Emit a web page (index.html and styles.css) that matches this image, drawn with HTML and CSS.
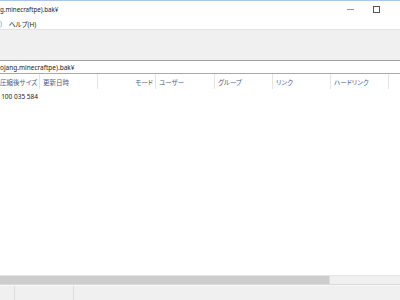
FILE: index.html
```html
<!DOCTYPE html>
<html lang="ja">
<head>
  <meta charset="UTF-8" />
  <title>7-Zip</title>
  <link rel="stylesheet" href="styles.css">
</head>
<body>
  <div class="window">
    <div class="titlebar">
      <span class="title">g.minecraftpe).bak¥</span>
      <div class="controls">
        <span class="ctl-min"></span>
        <span class="ctl-max"></span>
      </div>
    </div>

    <div class="menubar">
      <span class="menu-item menu-cut">)</span>
      <span class="menu-item">ヘルプ(H)</span>
    </div>

    <div class="toolbar"></div>

    <div class="address">
      <span class="path">ojang.minecraftpe).bak¥</span>
    </div>

    <div class="list">
      <div class="list-head">
        <div class="col">圧縮後サイズ</div>
        <div class="col">更新日時</div>
        <div class="col right">モード</div>
        <div class="col">ユーザー</div>
        <div class="col">グループ</div>
        <div class="col">リンク</div>
        <div class="col">ハードリンク</div>
        <div class="col last"></div>
      </div>
      <div class="list-row">
        <div class="cell right">100 035 584</div>
      </div>
    </div>

    <div class="hscroll">
      <div class="thumb"></div>
    </div>

    <div class="statusbar">
      <div class="pane first"></div>
      <div class="pane second"></div>
      <div class="pane"></div>
    </div>
  </div>
</body>
</html>
```

FILE: styles.css
```css
html, body {
  margin: 0;
  padding: 0;
}

body {
  width: 400px;
  height: 300px;
  overflow: hidden;
  background: #fff;
  font-family: "Noto Sans", "Noto Sans CJK JP", sans-serif;
  font-size: 6.5px;
  font-feature-settings: "palt";
  color: #1a1a1a;
}

.window {
  display: flex;
  flex-direction: column;
  height: 300px;
  border-top: 1px solid #a8c6e8;
  box-sizing: border-box;
}

/* Title bar */
.titlebar {
  height: 17px;
  display: flex;
  align-items: center;
  justify-content: space-between;
}
.title {
  font-size: 6.2px;
  white-space: nowrap;
}
.controls {
  display: flex;
  align-items: center;
  gap: 19px;
  margin-right: 20px;
}
.ctl-min {
  width: 7px;
  height: 1px;
  background: #999;
}
.ctl-max {
  width: 5px;
  height: 5px;
  border: 1px solid #555;
}

/* Menu */
.menubar {
  height: 11px;
  display: flex;
  align-items: center;
  gap: 7px;
}
.menu-item {
  white-space: nowrap;
}
.menu-cut {
  color: #6a8fc0;
}

/* Toolbar */
.toolbar {
  background: #f0f0f0;
  border-top: 1px solid #e3e3e3;
  border-bottom: 1px solid #a0a0a0;
  box-sizing: border-box;
  height: 32px;
}

/* Address bar */
.address {
  height: 13px;
  display: flex;
  align-items: center;
  border-bottom: 1px solid #a9a9a9;
  box-sizing: border-box;
}
.path {
  white-space: nowrap;
}

/* File list */
.list {
  flex: 1;
  overflow: hidden;
}
.list-head {
  display: grid;
  grid-template-columns: 40px 58px 58px 59px 58px 58px 58px 1fr;
  height: 15px;
  color: #4d6082;
}
.col {
  display: flex;
  align-items: center;
  padding-left: 3px;
  border-right: 1px solid #e5e5e5;
  white-space: nowrap;
}
.col:first-child {
  padding-left: 0;
}
.col.right {
  justify-content: flex-end;
  padding-right: 2px;
}
.col.last {
  border-right: none;
}
.list-row {
  display: grid;
  grid-template-columns: 40px 1fr;
  height: 12px;
  margin-top: 1px;
}
.cell {
  display: flex;
  align-items: center;
  white-space: nowrap;
}
.cell.right {
  justify-content: flex-end;
  padding-right: 2px;
}

/* Horizontal scrollbar */
.hscroll {
  height: 10px;
  background: #f0f0f0;
  border-top: 1px solid #e6e6e6;
  border-bottom: 1px solid #d9d9d9;
  box-sizing: border-box;
  display: flex;
}
.thumb {
  width: 329px;
  background: #cdcdcd;
  border-right: 1px solid #dadada;
}

/* Status bar */
.statusbar {
  height: 14px;
  background: #f0f0f0;
  border-top: 1px solid #f8f8f8;
  display: flex;
}
.pane {
  flex: 1;
}
.pane.first {
  flex: none;
  width: 14px;
  border-right: 1px solid #dcdcdc;
}
.pane.second {
  flex: none;
  width: 58px;
  border-right: 1px solid #dcdcdc;
}
```
